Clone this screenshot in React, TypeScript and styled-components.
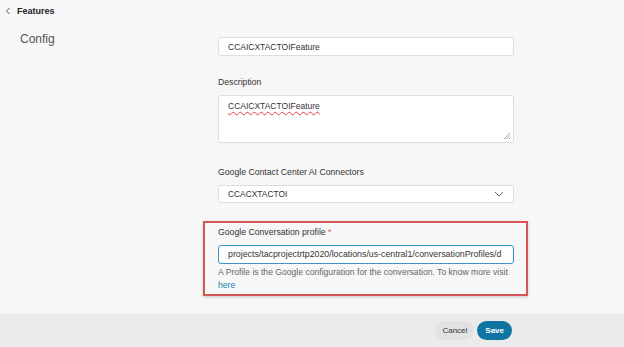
import React from 'react';
import styled, { createGlobalStyle } from 'styled-components';

const GlobalStyle = createGlobalStyle`
    html, body {
        margin: 0;
        padding: 0;
        background: #f7f7f7;
    }
    body {
        font-family: "Liberation Sans", Arial, sans-serif;
        color: #333;
    }
`;

const Page = styled.div`
    width: 624px;
    height: 347px;
    display: flex;
    flex-direction: column;
    background: #f7f7f7;
    overflow: hidden;
`;

const Header = styled.div`
    height: 22px;
    display: flex;
    align-items: center;
    gap: 6px;
    padding-left: 5px;
    font-size: 9px;
    font-weight: 700;
    color: #222;
`;

const Body = styled.div`
    flex: 1;
    display: flex;
    padding: 10px 0 0 20px;
`;

const Sidebar = styled.div`
    width: 198px;
    font-size: 12px;
    color: #555;
    line-height: 14px;
`;

const Form = styled.div`
    width: 296px;
    display: flex;
    flex-direction: column;
    padding-top: 5px;
`;

const Label = styled.div<{ $top?: number; $gap?: number }>`
    font-size: 8.7px;
    line-height: 10px;
    color: #333;
    margin: ${p => p.$top ?? 0}px 0 ${p => p.$gap ?? 8}px;
`;

const Required = styled.span`
    color: #d9534f;
`;

const Input = styled.input<{ $focus?: boolean }>`
    box-sizing: border-box;
    width: 296px;
    height: 19px;
    padding: 0 4px 0 9px;
    border: 1px solid ${p => (p.$focus ? '#3b95c8' : '#dedede')};
    border-radius: 3px;
    background: #fff;
    font-family: "Liberation Sans", Arial, sans-serif;
    font-size: ${p => (p.$focus ? 8.8 : 8.5)}px;
    color: #333;
    outline: none;
`;

const TextArea = styled.div`
    position: relative;
    box-sizing: border-box;
    width: 296px;
    height: 48px;
    padding: 5px 9px;
    border: 1px solid #dedede;
    border-radius: 3px;
    background: #fff;
    font-size: 8.5px;
    line-height: 10px;
    color: #333;
`;

const Misspelled = styled.span`
    text-decoration: underline wavy #e04040;
    text-decoration-thickness: 1px;
    text-underline-offset: 2px;
`;

const Grip = styled.svg`
    position: absolute;
    right: 2px;
    bottom: 2px;
`;

const Select = styled.div`
    box-sizing: border-box;
    width: 296px;
    height: 18px;
    display: flex;
    align-items: center;
    justify-content: space-between;
    padding: 0 9px;
    border: 1px solid #dedede;
    border-radius: 3px;
    background: #fff;
    font-size: 8.4px;
    color: #333;
`;

const Highlight = styled.div`
    box-sizing: border-box;
    width: 325px;
    height: 75px;
    margin: 18px 0 0 -15px;
    padding: 4px 0 0 13px;
    border: 2px solid #d65656;
    box-shadow: 0 1px 3px rgba(0, 0, 0, 0.2);
`;

const Help = styled.div`
    font-size: 8.6px;
    line-height: 13.5px;
    color: #666;
    margin-top: 2px;
    white-space: nowrap;
`;

const Link = styled.span`
    color: #1d7fb3;
`;

const Footer = styled.div`
    height: 33px;
    display: flex;
    align-items: center;
    justify-content: flex-end;
    gap: 3px;
    padding-right: 112px;
    background: #ebebeb;
`;

const Button = styled.button<{ $primary?: boolean }>`
    height: 19px;
    padding: 0 ${p => (p.$primary ? 8 : 7)}px;
    border: none;
    border-radius: 10px;
    background: ${p => (p.$primary ? '#0f74a2' : '#e2e2e2')};
    color: ${p => (p.$primary ? '#fff' : '#333')};
    font-family: "Liberation Sans", Arial, sans-serif;
    font-size: 8px;
    font-weight: ${p => (p.$primary ? 700 : 400)};
    cursor: pointer;
`;

const App = () => {
    return (
        <Page>
            <GlobalStyle />
            <Header>
                <svg width="6" height="8" viewBox="0 0 6 8">
                    <path d="M4.5 1 L1.5 4 L4.5 7" fill="none" stroke="#555" strokeWidth="1" />
                </svg>
                Features
            </Header>
            <Body>
                <Sidebar>Config</Sidebar>
                <Form>
                    <Input readOnly defaultValue="CCAICXTACTOIFeature" />
                    <Label $top={21}>Description</Label>
                    <TextArea>
                        <Misspelled>CCAICXTACTOIFeature</Misspelled>
                        <Grip width="8" height="8" viewBox="0 0 8 8">
                            <path d="M7 1 L1 7 M7 3.5 L3.5 7 M7 6 L6 7" stroke="#888" strokeWidth="0.8" />
                        </Grip>
                    </TextArea>
                    <Label $top={24}>Google Contact Center AI Connectors</Label>
                    <Select>
                        CCACXTACTOI
                        <svg width="10" height="6" viewBox="0 0 10 6">
                            <path d="M1 1 L5 5 L9 1" fill="none" stroke="#666" strokeWidth="1" />
                        </svg>
                    </Select>
                    <Highlight>
                        <Label $gap={6}>
                            Google Conversation profile <Required>*</Required>
                        </Label>
                        <Input $focus readOnly defaultValue="projects/tacprojectrtp2020/locations/us-central1/conversationProfiles/d" />
                        <Help>
                            A Profile is the Google configuration for the conversation. To know more visit
                            <br />
                            <Link>here</Link>
                        </Help>
                    </Highlight>
                </Form>
            </Body>
            <Footer>
                <Button>Cancel</Button>
                <Button $primary>Save</Button>
            </Footer>
        </Page>
    );
};

export default App;
